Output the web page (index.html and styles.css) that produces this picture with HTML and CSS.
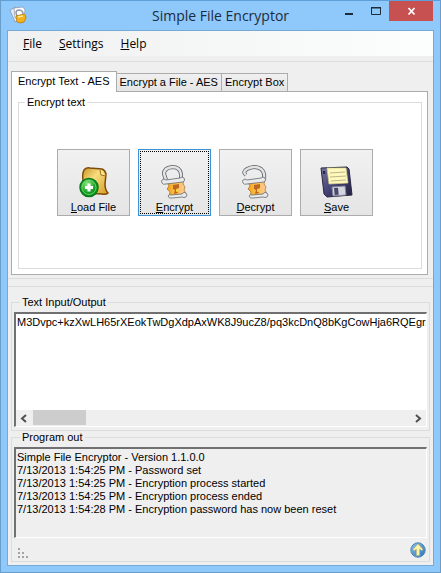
FILE: index.html
```html
<!DOCTYPE html>
<html lang="en">
<head>
<meta charset="utf-8">
<meta name="viewport" content="width=device-width, initial-scale=1">
<title>Simple File Encryptor</title>
<link rel="stylesheet" href="styles.css">
</head>
<body>
<div class="window">
  <header class="titlebar">
    <svg class="app-icon" viewBox="0 0 18 18" aria-hidden="true">
      <path d="M1 4 7 1l4 11-5 4z" fill="#e8edf4" stroke="#7d91a9" stroke-width=".7"/>
      <path d="m5 2 9-1 2 3-1 9-9-1z" fill="#fff" stroke="#8291a6" stroke-width=".7"/>
      <path d="M8 10 7 7q0-3 3-3t4 3v3" fill="none" stroke="#919aa8" stroke-width="1.5"/>
      <path d="m7 10 8-2q2 1 2 4l-2 4q-4 2-7 0z" fill="#f5b01d" stroke="#b77b09" stroke-width=".8"/>
      <path d="m9 11 5-1" stroke="#ffe98b" stroke-width="1.5"/>
    </svg>
    <h1 class="title">Simple File Encryptor</h1>
    <div class="controls">
      <button class="control" aria-label="Minimize"><svg viewBox="0 0 28 20"><path d="M12 13h8" stroke="#1c2c3c" stroke-width="2"/></svg></button>
      <button class="control" aria-label="Maximize"><svg viewBox="0 0 28 20"><path d="M10.500 7h9v6.500h-9zM10 6.500h10" fill="none" stroke="#1c2c3c"/></svg></button>
      <button class="control close" aria-label="Close"><svg viewBox="0 0 44 20"><path d="m19.500 7 6 6.500m0-6.500-6 6.500" stroke="#fff" stroke-width="1.800"/></svg></button>
    </div>
  </header>
  <main class="client">
    <nav class="menu">
      <button class="menu-item"><u>F</u>ile</button>
      <button class="menu-item"><u>S</u>ettings</button>
      <button class="menu-item"><u>H</u>elp</button>
    </nav>
    <section class="panel">
      <div class="tabs" role="tablist">
        <button class="tab active" role="tab" aria-selected="true">Encrypt Text - AES</button>
        <button class="tab" role="tab" aria-selected="false">Encrypt a File - AES</button>
        <button class="tab" role="tab" aria-selected="false">Encrypt Box</button>
      </div>
      <div class="page" role="tabpanel">
        <fieldset class="group actions">
          <legend>Encrypt text</legend>
          <div class="buttons">
            <button class="action">
              <svg viewBox="0 0 34 34" aria-hidden="true">
                <defs><linearGradient id="gold" x2="1" y2="1"><stop stop-color="#c9921e"/><stop offset=".4" stop-color="#f7dd80"/><stop offset="1" stop-color="#d79b22"/></linearGradient>
                <radialGradient id="green" cx=".4" cy=".3"><stop stop-color="#8be67b"/><stop offset="1" stop-color="#109a25"/></radialGradient></defs>
                <path d="M7 5q2-3 6-2l12 1q3 1 4 5l-1 10q0 6 3 9-2 2-6 1l-17-1q-2-6-2-13Q5 9 7 5z" fill="url(#gold)" stroke="#7c4c0b" stroke-width="1.500"/>
                <path d="m23 5 1 5 5 1" fill="#fff0a5" stroke="#a46c13"/>
                <circle cx="12" cy="22.500" r="9" fill="url(#green)" stroke="#087a1b" stroke-width="1.500"/>
                <circle cx="12" cy="22.500" r="7" fill="none" stroke="#7bdc71" stroke-width=".8"/>
                <path d="M12 18.500v8M8 22.500h8" stroke="#fff" stroke-width="3"/>
              </svg>
              <span><u>L</u>oad File</span>
            </button>
            <button class="action focused">
              <svg viewBox="0 0 34 34" aria-hidden="true">
                <defs><linearGradient id="amber" x2="1"><stop stop-color="#f1a51a"/><stop offset=".5" stop-color="#ffc14d"/><stop offset="1" stop-color="#f8cba8"/></linearGradient></defs>
                <path d="M8 15 6 9q0-6 8-7 8 0 9 7v5" fill="none" stroke="#606366" stroke-width="4"/>
                <path d="M8 15 6 9q0-6 8-7 8 0 9 7v5" fill="none" stroke="#e2e4e6" stroke-width="2.400"/>
                <path d="m9 17 17-2-1 4 2 3-1 3 2 4-17 2 1-4-3-3 2-3z" fill="url(#amber)" stroke="#a56c20" stroke-width=".7"/>
                <path d="M4 15q2-2 4 0l14-2q2-2 4 0t-1 4l-17 2q-3 1-4-1t0-3zM10 31q1-2 3-1l11-1q2-3 4-1t0 4q-2 1-4 0l-10 1q-3 1-4-2z" fill="#e8eaec" stroke="#66696c" stroke-width=".8"/>
                <path d="m15 20 6-1v4l-3 1 2 4-4 1 1-4-2-1z" fill="#bd6525"/><path d="m18 24 3 2-3 1z" fill="#f8d73c"/>
              </svg>
              <span><u>E</u>ncrypt</span>
            </button>
            <button class="action">
              <svg viewBox="0 0 34 34" aria-hidden="true">
                <path d="M7 10Q3 7 8 4q8-4 14 0 4 3 3 10" fill="none" stroke="#606366" stroke-width="4"/>
                <path d="M7 10Q3 7 8 4q8-4 14 0 4 3 3 10" fill="none" stroke="#e2e4e6" stroke-width="2.400"/>
                <path d="m9 17 17-2-1 4 2 3-1 3 2 4-17 2 1-4-3-3 2-3z" fill="url(#amber)" stroke="#a56c20" stroke-width=".7"/>
                <path d="M4 15q2-2 4 0l14-2q2-2 4 0t-1 4l-17 2q-3 1-4-1t0-3zM10 31q1-2 3-1l11-1q2-3 4-1t0 4q-2 1-4 0l-10 1q-3 1-4-2z" fill="#e8eaec" stroke="#66696c" stroke-width=".8"/>
                <path d="m15 20 6-1v4l-3 1 2 4-4 1 1-4-2-1z" fill="#bd6525"/><path d="m18 24 3 2-3 1z" fill="#f8d73c"/>
              </svg>
              <span><u>D</u>ecrypt</span>
            </button>
            <button class="action">
              <svg viewBox="0 0 34 34" aria-hidden="true">
                <defs><linearGradient id="disk" x2="1" y2="1"><stop stop-color="#77769c"/><stop offset=".5" stop-color="#454376"/><stop offset="1" stop-color="#22203e"/></linearGradient></defs>
                <path d="m1 3 26-1 2 2 3 26-25 2-3-3z" fill="url(#disk)" stroke="#282641"/>
                <path d="M7 3h19l2 15-19 1z" fill="#fff8bd" stroke="#d7cf83" stroke-width=".7"/>
                <path d="m10 8 15-1M10 12l16-1M11 16l15-1" stroke="#aaa579" stroke-width=".8"/>
                <path d="m12 22 13-1 1 9-13 1z" fill="#d4d6df" stroke="#85879b"/>
                <path d="m14 23 4-.3.700 7-4 .3z" fill="#4a4869"/><path d="m3 6 2 0 .3 3-2 0z" fill="#252341"/>
              </svg>
              <span><u>S</u>ave</span>
            </button>
          </div>
        </fieldset>
      </div>
    </section>
    <section class="panel lower">
      <fieldset class="group io">
        <legend><label for="io">Text Input/Output</label></legend>
        <div class="sunken editor">
          <textarea id="io" wrap="off" spellcheck="false">M3Dvpc+kzXwLH65rXEokTwDgXdpAxWK8J9ucZ8/pq3kcDnQ8bKgCowHja6RQEgrA</textarea>
          <div class="scrollbar">
            <button class="arrow" aria-label="Scroll left"><svg viewBox="0 0 17 15"><path d="m10 4-4 3.500 4 3.500" fill="none" stroke="#505050" stroke-width="2"/></svg></button>
            <div class="track"><div class="thumb"></div></div>
            <button class="arrow" aria-label="Scroll right"><svg viewBox="0 0 17 15"><path d="m7 4 4 3.500-4 3.500" fill="none" stroke="#505050" stroke-width="2"/></svg></button>
          </div>
        </div>
      </fieldset>
      <fieldset class="group out">
        <legend>Program out</legend>
        <div class="sunken log" role="log">
          <p>Simple File Encryptor - Version 1.1.0.0</p>
          <p>7/13/2013 1:54:25 PM - Password set</p>
          <p>7/13/2013 1:54:25 PM - Encryption process started</p>
          <p>7/13/2013 1:54:25 PM - Encryption process ended</p>
          <p>7/13/2013 1:54:28 PM - Encryption password has now been reset</p>
        </div>
        <footer class="status">
          <svg class="grip" viewBox="0 0 10 10" aria-hidden="true"><path d="M0 0h2v2H0zM0 4h2v2H0zM4 4h2v2H4zM0 8h2v2H0zM4 8h2v2H4zM8 8h2v2H8z" fill="#a3a3a3"/></svg>
          <button class="update" aria-label="Check for updates">
            <svg viewBox="0 0 16 16"><defs><linearGradient id="blue" x2="1" y2="1"><stop stop-color="#8fc0e6"/><stop offset="1" stop-color="#2c72b8"/></linearGradient></defs>
            <circle cx="8" cy="8" r="7.200" fill="url(#blue)" stroke="#4c83b5"/><path d="m8 2 5 5.500-1.200 1L9.500 7v6.500h-3V7L4.200 8.500 3 7.500z" fill="#fff3a6" stroke="#c9b866" stroke-width=".4"/></svg>
          </button>
        </footer>
      </fieldset>
    </section>
  </main>
</div>
</body>
</html>
```
FILE: styles.css
```css
* { box-sizing: border-box; }
body { margin: 0; font: 11px/13px "Liberation Sans", Arial, sans-serif; color: #000; }
button, textarea { font: inherit; color: inherit; border: 0; padding: 0; margin: 0; background: none; border-radius: 0; }
button svg { display: block; }
p { margin: 0; }

.window { min-height: 100vh; display: flex; flex-direction: column; padding: 0 7px 7px; background: #8fc8fb; border: 1px solid #699dca; border-top-color: #5f9fd8; }
.titlebar { height: 29px; display: grid; grid-template-columns: 110px 1fr 110px; align-items: start; }
.app-icon { width: 18px; height: 18px; margin: 5px 0 0 1px; }
.title { margin: 4px 0 0; text-align: center; white-space: nowrap; font: 14px/22px "Open Sans", "Segoe UI", sans-serif; color: #1c2c3c; }
.controls { display: flex; justify-content: flex-end; }
.control { width: 28px; height: 20px; }
.close { width: 44px; background: #c75050; }

.client { flex: 1; display: flex; flex-direction: column; margin: 0 -1px -1px; border: 1px solid #76a9d3; background: #efefef; }
.menu { height: 25px; display: flex; align-items: center; gap: 17px; padding-left: 15px; margin-bottom: 5px; background: linear-gradient(90deg, #f0f0f0, #fcfdfd); font: 12px/18px "Open Sans", "Segoe UI", sans-serif; }
u { text-underline-offset: 1px; }

.panel { border-top: 1px solid #dcdcdc; border-bottom: 1px solid #dcdcdc; padding: 9px 5px 3px 3px; }
.tabs { display: flex; align-items: flex-end; }
.tab { height: 18px; padding: 0 3px; border: 1px solid #acacac; border-bottom: 0; border-left: 0; background: linear-gradient(#f0f0f0, #e5e5e5); white-space: nowrap; }
.tab.active { height: 21px; margin-bottom: -1px; padding: 0 6px 2px; border-left: 1px solid #acacac; background: #fff; position: relative; }
.page { padding: 4px 5px 5px 6px; background: #fff; border: 1px solid #acacac; }

.group { min-width: 0; margin: 0; padding: 0; border: 1px solid #dcdcdc; }
.group legend { margin-left: 6px; padding: 0 2px; }
.buttons { display: flex; justify-content: center; gap: 8px; padding: 40px 10px 52px 0; }
.action { width: 73px; height: 67px; display: flex; flex-direction: column; align-items: center; justify-content: flex-end; gap: 2px; padding-bottom: 1px; border: 1px solid #acacac; background: linear-gradient(#f1f1f1, #e5e5e5); }
.action svg { width: 34px; height: 34px; }
.action.focused { border-color: #3c92d4; outline: 1px dotted #000; outline-offset: -3px; }

.lower { flex: 1; display: flex; flex-direction: column; margin-top: 7px; padding: 9px 3px 3px; border-bottom: 0; }
.io { flex: 1; display: flex; flex-direction: column; }
.io, .out { padding: 3px 2px 2px; }
.sunken { border: 1px solid #fff; border-top: 2px solid #707070; border-left: 2px solid #707070; }
.editor { height: 115px; display: flex; flex-direction: column; background: #fff; }
.editor textarea { flex: 1; width: 100%; min-height: 0; padding: 2px 1px; resize: none; outline: 0; overflow: hidden; background: #fff; display: block; white-space: pre; }
.scrollbar { display: flex; height: 16px; background: #efefef; }
.arrow { width: 17px; }
.track { flex: 1; }
.thumb { width: 14%; height: 15px; background: #cdcdcd; }
.log { height: 91px; padding: 2px 1px; }
.status { height: 23px; display: flex; align-items: center; justify-content: space-between; padding: 0 1px 0 4px; }
.out { padding-bottom: 0; }
.grip { width: 10px; height: 10px; margin-top: 6px; }
.update { width: 16px; height: 16px; }
```
